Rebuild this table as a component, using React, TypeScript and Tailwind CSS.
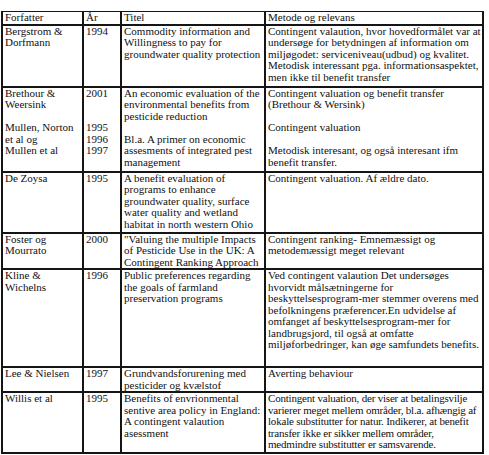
import React from "react";

type Row = {
  h: string;
  author: React.ReactNode;
  year: React.ReactNode;
  title: React.ReactNode;
  method: React.ReactNode;
  tight?: boolean;
};

const rows: Row[] = [
  {
    h: "h-[62px]",
    author: <>Bergstrom &amp;<br />Dorfmann</>,
    year: "1994",
    title: <>Commodity information and<br />Willingness to pay for<br />groundwater quality protection</>,
    method: (
      <>
        Contingent valaution, hvor hovedformålet var at<br />
        undersøge for betydningen af information om<br />
        miljøgodet: serviceniveau(udbud) og kvalitet.<br />
        Metodisk interessant pga. informationsaspektet,<br />
        men ikke til benefit transfer
      </>
    ),
  },
  {
    h: "h-[85px]",
    author: <>Brethour &amp;<br />Weersink<br /><br />Mullen, Norton<br />et al og<br />Mullen et al</>,
    year: <>2001<br /><br /><br />1995<br />1996<br />1997</>,
    title: (
      <>
        An economic evaluation of the<br />
        environmental benefits from<br />
        pesticide reduction<br />
        <br />
        Bl.a. A primer on economic<br />
        assesments of integrated pest<br />
        management
      </>
    ),
    method: (
      <>
        Contingent valuation og benefit transfer<br />
        (Brethour &amp; Wersink)<br />
        <br />
        Contingent valuation<br />
        <br />
        Metodisk interesant, og også interesant ifm<br />
        benefit transfer.
      </>
    ),
  },
  {
    h: "h-[61px]",
    author: "De Zoysa",
    year: "1995",
    title: (
      <>
        A benefit evaluation of<br />
        programs to enhance<br />
        groundwater quality, surface<br />
        water quality and wetland<br />
        habitat in north western Ohio
      </>
    ),
    method: "Contingent valuation. Af ældre dato.",
  },
  {
    h: "h-[36px]",
    author: <>Foster og<br />Mourrato</>,
    year: "2000",
    title: <>"Valuing the multiple Impacts<br />of Pesticide Use in the UK: A<br />Contingent Ranking Approach</>,
    method: <>Contingent ranking- Emnemæssigt og<br />metodemæssigt meget relevant</>,
  },
  {
    h: "h-[98px]",
    author: <>Kline &amp;<br />Wichelns</>,
    year: "1996",
    title: <>Public preferences regarding<br />the goals of farmland<br />preservation programs</>,
    method: (
      <>
        Ved contingent valaution Det undersøges<br />
        hvorvidt målsætningerne for<br />
        beskyttelsesprogram-mer stemmer overens med<br />
        befolkningens præferencer.En udvidelse af<br />
        omfanget af beskyttelsesprogram-mer for<br />
        landbrugsjord, til også at omfatte<br />
        miljøforbedringer, kan øge samfundets benefits.
      </>
    ),
  },
  {
    h: "h-[25px]",
    author: "Lee & Nielsen",
    year: "1997",
    title: <>Grundvandsforurening med<br />pesticider og kvælstof</>,
    method: "Averting behaviour",
  },
  {
    h: "h-[61px]",
    author: "Willis et al",
    year: "1995",
    title: (
      <>
        Benefits of envrionmental<br />
        sentive area policy in England:<br />
        A contingent valaution<br />
        asessment
      </>
    ),
    method: (
      <>
        Contingent valuation, der viser at betalingsvilje<br />
        varierer meget mellem områder, bl.a. afhængig af<br />
        lokale substitutter for natur. Indikerer, at benefit<br />
        transfer ikke er sikker mellem områder,<br />
        medmindre substitutter er samsvarende.
      </>
    ),
    tight: true,
  },
];

const cell = "align-top border-2 border-[#151515] pl-[2px] pr-0 pt-0 whitespace-nowrap overflow-hidden";

export default function App() {
  return (
    <div className="w-[489px] h-[455px] bg-white overflow-hidden pt-[11px] pl-[1px]">
      <table
        className="table-fixed border-collapse w-[481px] text-[11px] leading-[11.5px] text-[#111]"
        style={{ fontFamily: '"Liberation Serif", "Times New Roman", serif' }}
      >
        <colgroup>
          <col className="w-[81px]" />
          <col className="w-[38px]" />
          <col className="w-[144px]" />
          <col className="w-[218px]" />
        </colgroup>
        <thead>
          <tr className="h-[12px]">
            <th className={`${cell} border-t font-normal text-left`}>Forfatter</th>
            <th className={`${cell} border-t font-normal text-left`}>År</th>
            <th className={`${cell} border-t font-normal text-left`}>Titel</th>
            <th className={`${cell} border-t font-normal text-left`}>Metode og relevans</th>
          </tr>
        </thead>
        <tbody>
          {rows.map((r, i) => (
            <tr key={i} className={r.h}>
              <td className={cell}>{r.author}</td>
              <td className={cell}>{r.year}</td>
              <td className={cell}>{r.title}</td>
              <td className={r.tight ? `${cell} tracking-[-0.2px]` : cell}>{r.method}</td>
            </tr>
          ))}
        </tbody>
      </table>
    </div>
  );
}
